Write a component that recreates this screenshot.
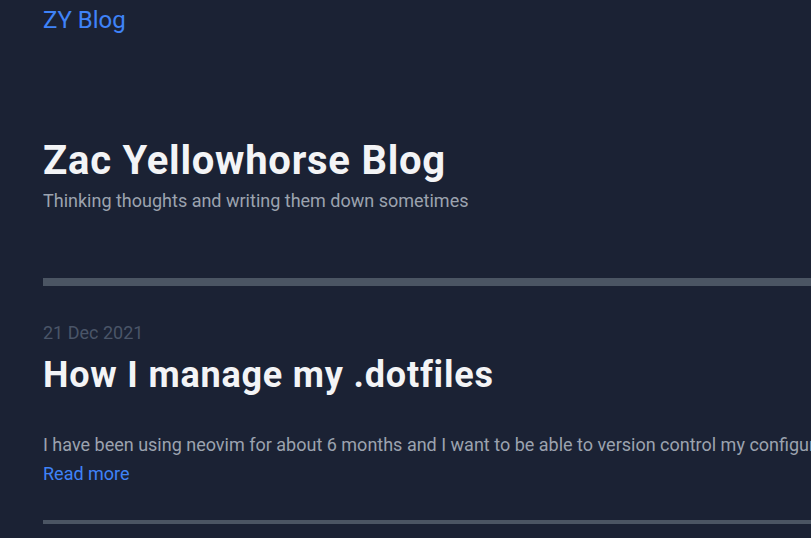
import React from "react";

export default function App() {
  return (
    <div
      className="min-h-[538px] w-full overflow-hidden bg-[#1b2234]"
      style={{ fontFamily: 'Roboto, sans-serif' }}
    >
      <div className="pl-[43px]">
        <nav className="pt-[4px]">
          <a className="text-[24px] leading-[32px] text-[#3f83f8]">ZY Blog</a>
        </nav>
        <header className="mt-[101px]">
          <h1 className="text-[40px] font-bold leading-[48px] tracking-[0.75px] text-[#f3f4f6]">
            Zac Yellowhorse Blog
          </h1>
          <p className="mt-[2px] text-[18px] leading-[28px] text-[#9ca3af]">
            Thinking thoughts and writing them down sometimes
          </p>
        </header>
        <div className="mt-[63px] h-[8px] bg-[#4b5563]" />
        <article className="pt-[33px]">
          <div className="text-[18px] leading-[28px] text-[#4a5568]">21 Dec 2021</div>
          <h2 className="mt-[6px] text-[36px] font-bold leading-[44px] tracking-[0.8px] text-[#f3f4f6]">
            How I manage my .dotfiles
          </h2>
          <p className="mt-[33px] whitespace-nowrap text-[18px] leading-[29px] text-[#9ca3af]">
            I have been using neovim for about 6 months and I want to be able to version control my configuration files.
          </p>
          <a className="block text-[18px] leading-[29px] text-[#3f83f8]">Read more</a>
        </article>
        <div className="mt-[32px] h-[4px] bg-[#4b5563]" />
      </div>
    </div>
  );
}
